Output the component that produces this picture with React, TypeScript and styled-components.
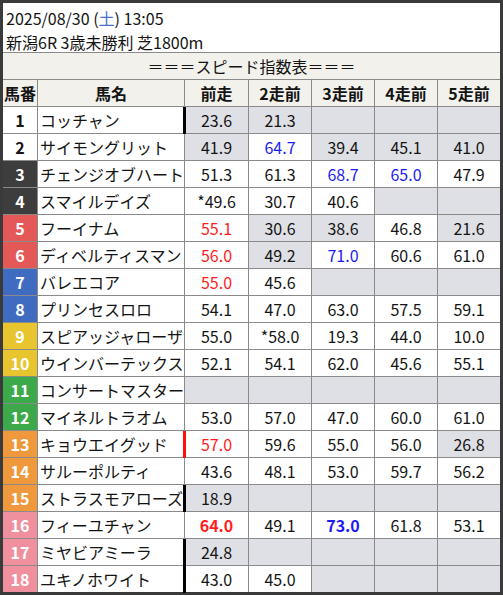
import React from 'react';
import styled, { createGlobalStyle } from 'styled-components';

const GlobalStyle = createGlobalStyle`
  html, body {
    margin: 0;
    padding: 0;
    background: #fff;
  }
  body {
    font-family: "Noto Sans CJK JP", "Noto Sans", sans-serif;
    color: #141414;
  }
`;

const Frame = styled.div`
  width: 497px;
  border: 3px solid #3a3a3a;
  border-top-width: 3px;
  background: #fff;
`;

const RaceHeader = styled.div`
  height: 50px;
  box-sizing: border-box;
  padding: 3px 0 0 3px;
  border-bottom: 1px solid #8a8a8a;
  font-size: 16px;
  line-height: 24px;
  .sat {
    color: #4a6fc4;
  }
`;

const Grid = styled.div`
  display: grid;
  grid-template-columns: 34px 146px 63px 62px 62px 62px 62px;
  grid-auto-rows: 26px;
  gap: 1px;
  background: #8a8a8a;
`;

const Title = styled.div`
  grid-column: 1 / -1;
  background: #f3f1ec;
  text-align: center;
  font-size: 16px;
  line-height: 26px;
`;

const HeadCell = styled.div`
  background: #f3f1ec;
  text-align: center;
  font-size: 16px;
  font-weight: bold;
  line-height: 26px;
`;

const NumCell = styled.div<{ $bg: string; $fg: string }>`
  background: ${p => p.$bg};
  color: ${p => p.$fg};
  text-align: center;
  font-size: 16px;
  font-weight: bold;
  line-height: 26px;
`;

const NameCell = styled.div`
  background: #fff;
  padding-left: 2px;
  font-size: 16px;
  line-height: 26px;
  white-space: nowrap;
  overflow: hidden;
`;

const ScoreCell = styled.div<{ $gray: boolean; $color?: string; $bold?: boolean; $bar?: string }>`
  position: relative;
  background: ${p => (p.$gray ? '#dfe0e5' : '#fff')};
  color: ${p => p.$color || '#141414'};
  font-weight: ${p => (p.$bold ? 'bold' : 'normal')};
  text-align: center;
  font-size: 16px;
  line-height: 26px;
  &::before {
    content: '';
    display: ${p => (p.$bar ? 'block' : 'none')};
    position: absolute;
    left: -2px;
    top: 0;
    bottom: -1px;
    width: 3px;
    background: ${p => p.$bar};
  }
`;

const BLUE = '#1c1cf2';
const RED = '#ff1c1c';

type Score = { v?: string; g?: boolean; c?: string; b?: boolean };

type Horse = {
  no: number;
  name: string;
  bg: string;
  fg: string;
  bar?: string;
  scores: Score[];
};

const e: Score = { g: true };

const horses: Horse[] = [
  { no: 1, name: 'コッチャン', bg: '#fff', fg: '#141414', bar: '#000', scores: [{ v: '23.6', g: true }, { v: '21.3', g: true }, e, e, e] },
  { no: 2, name: 'サイモングリット', bg: '#fff', fg: '#141414', scores: [{ v: '41.9', g: true }, { v: '64.7', c: BLUE }, { v: '39.4', g: true }, { v: '45.1', g: true }, { v: '41.0', g: true }] },
  { no: 3, name: 'チェンジオブハート', bg: '#3d3d3d', fg: '#fff', scores: [{ v: '51.3' }, { v: '61.3' }, { v: '68.7', c: BLUE }, { v: '65.0', c: BLUE }, { v: '47.9' }] },
  { no: 4, name: 'スマイルデイズ', bg: '#3d3d3d', fg: '#fff', scores: [{ v: '*49.6' }, { v: '30.7' }, { v: '40.6' }, e, e] },
  { no: 5, name: 'フーイナム', bg: '#e45858', fg: '#fff', scores: [{ v: '55.1', c: RED }, { v: '30.6', g: true }, { v: '38.6', g: true }, { v: '46.8' }, { v: '21.6', g: true }] },
  { no: 6, name: 'ディベルティスマン', bg: '#e45858', fg: '#fff', scores: [{ v: '56.0', c: RED }, { v: '49.2', g: true }, { v: '71.0', c: BLUE }, { v: '60.6' }, { v: '61.0' }] },
  { no: 7, name: 'バレエコア', bg: '#3f6cc0', fg: '#fff', scores: [{ v: '55.0', c: RED }, { v: '45.6' }, e, e, e] },
  { no: 8, name: 'プリンセスロロ', bg: '#3f6cc0', fg: '#fff', scores: [{ v: '54.1' }, { v: '47.0' }, { v: '63.0' }, { v: '57.5' }, { v: '59.1' }] },
  { no: 9, name: 'スピアッジャローザ', bg: '#e8c42e', fg: '#fff', scores: [{ v: '55.0' }, { v: '*58.0' }, { v: '19.3' }, { v: '44.0' }, { v: '10.0' }] },
  { no: 10, name: 'ウインバーテックス', bg: '#e8c42e', fg: '#fff', scores: [{ v: '52.1' }, { v: '54.1' }, { v: '62.0' }, { v: '45.6' }, { v: '55.1' }] },
  { no: 11, name: 'コンサートマスター', bg: '#3caa4a', fg: '#fff', scores: [e, e, e, e, e] },
  { no: 12, name: 'マイネルトラオム', bg: '#3caa4a', fg: '#fff', scores: [{ v: '53.0' }, { v: '57.0' }, { v: '47.0' }, { v: '60.0' }, { v: '61.0' }] },
  { no: 13, name: 'キョウエイグッド', bg: '#f0983c', fg: '#fff', bar: '#ff1010', scores: [{ v: '57.0', c: RED }, { v: '59.6' }, { v: '55.0' }, { v: '56.0' }, { v: '26.8', g: true }] },
  { no: 14, name: 'サルーポルティ', bg: '#f0983c', fg: '#fff', scores: [{ v: '43.6' }, { v: '48.1' }, { v: '53.0' }, { v: '59.7' }, { v: '56.2' }] },
  { no: 15, name: 'ストラスモアローズ', bg: '#f0983c', fg: '#fff', bar: '#000', scores: [{ v: '18.9', g: true }, e, e, e, e] },
  { no: 16, name: 'フィーユチャン', bg: '#f0909e', fg: '#fff', scores: [{ v: '64.0', c: RED, b: true }, { v: '49.1' }, { v: '73.0', c: BLUE, b: true }, { v: '61.8' }, { v: '53.1' }] },
  { no: 17, name: 'ミヤビアミーラ', bg: '#f0909e', fg: '#fff', bar: '#000', scores: [{ v: '24.8', g: true }, e, e, e, e] },
  { no: 18, name: 'ユキノホワイト', bg: '#f0909e', fg: '#fff', bar: '#000', scores: [{ v: '43.0' }, { v: '45.0' }, e, e, e] },
];

const columns = ['馬番', '馬名', '前走', '2走前', '3走前', '4走前', '5走前'];

function App() {
  return (
    <>
      <GlobalStyle />
      <Frame>
        <RaceHeader>
          <div>
            2025/08/30 (<span className="sat">土</span>) 13:05
          </div>
          <div>新潟6R 3歳未勝利 芝1800m</div>
        </RaceHeader>
        <Grid>
          <Title>＝＝＝スピード指数表＝＝＝</Title>
          {columns.map(c => (
            <HeadCell key={c}>{c}</HeadCell>
          ))}
          {horses.map(h => (
            <React.Fragment key={h.no}>
              <NumCell $bg={h.bg} $fg={h.fg}>
                {h.no}
              </NumCell>
              <NameCell>{h.name}</NameCell>
              {h.scores.map((s, i) => (
                <ScoreCell
                  key={i}
                  $gray={!!s.g}
                  $color={s.c}
                  $bold={s.b}
                  $bar={i === 0 ? h.bar : undefined}
                >
                  {s.v}
                </ScoreCell>
              ))}
            </React.Fragment>
          ))}
        </Grid>
      </Frame>
    </>
  );
}

export default App;
